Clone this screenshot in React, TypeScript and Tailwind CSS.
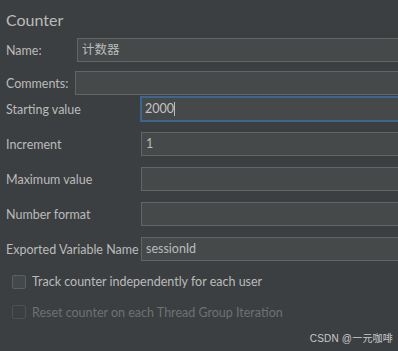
import React from 'react';

const font = { fontFamily: 'Lato, "Noto Sans", "Noto Sans CJK SC", sans-serif' };

function Field({ label, labelW, value, top, focused }: { label: string; labelW: string; value?: string; top: string; focused?: boolean }) {
  return (
    <div className={`flex items-center ${top} ${focused ? 'h-[26px]' : 'h-[24px]'}`}>
      <div className={`${labelW} shrink-0 pl-[6px] whitespace-nowrap text-[12.5px] text-[#bbbbbb] ${focused ? 'pt-[3px]' : 'pt-[3px]'}`}>{label}</div>
      <div
        className={
          focused
            ? 'flex-1 -mr-[10px] h-full bg-[#45494a] border-2 border-[#3e6490] flex items-center pl-[3px] text-[12.5px] text-[#c4c4c4]'
            : 'flex-1 -mr-[10px] h-full bg-[#45494a] border border-[#646464] flex items-center pl-[4px] text-[12.5px] text-[#bbbbbb]'
        }
      >
        {value}
        {focused && <span className="inline-block w-px h-[14px] bg-[#bbbbbb]" />}
      </div>
    </div>
  );
}

export default function App() {
  return (
    <div className="relative w-[398px] h-[351px] overflow-hidden bg-[#3c3f41] pt-[8px]" style={font}>
      <div className="h-[24px] leading-[24px] pl-[6px] text-[16px] text-[#bbbbbb]">Counter</div>

      <Field label="Name:" labelW="w-[77px]" value="计数器" top="mt-[6px]" />
      <Field label="Comments:" labelW="w-[75px]" top="mt-[9px]" />
      <Field label="Starting value" labelW="w-[140px]" value="2000" top="mt-[1px]" focused />
      <Field label="Increment" labelW="w-[141px]" value="1" top="mt-[10px]" />
      <Field label="Maximum value" labelW="w-[141px]" top="mt-[11px]" />
      <Field label="Number format" labelW="w-[141px]" top="mt-[11px]" />
      <Field label="Exported Variable Name" labelW="w-[141px]" value="sessionId" top="mt-[11px]" />

      <div className="mt-[11px] h-[20px] flex items-center pl-[12px]">
        <div className="w-[14px] h-[14px] rounded-[2px] border border-[#5e6060] bg-[#43494a]" />
        <span className="ml-[6px] pt-[1px] text-[12.5px] text-[#bbbbbb]">Track counter independently for each user</span>
      </div>
      <div className="mt-[10px] h-[20px] flex items-center pl-[12px]">
        <div className="w-[14px] h-[14px] rounded-[2px] border border-[#4e5152]" />
        <span className="ml-[6px] pt-[2px] text-[12.5px] text-[#6f7172]">Reset counter on each Thread Group Iteration</span>
      </div>

      <div className="absolute right-[5px] top-[331px] text-[10px] text-[#c9c9c9] tracking-[0.2px]" style={{ fontFamily: '"Liberation Sans", "Noto Sans CJK SC", sans-serif' }}>CSDN @一元咖啡</div>
    </div>
  );
}
